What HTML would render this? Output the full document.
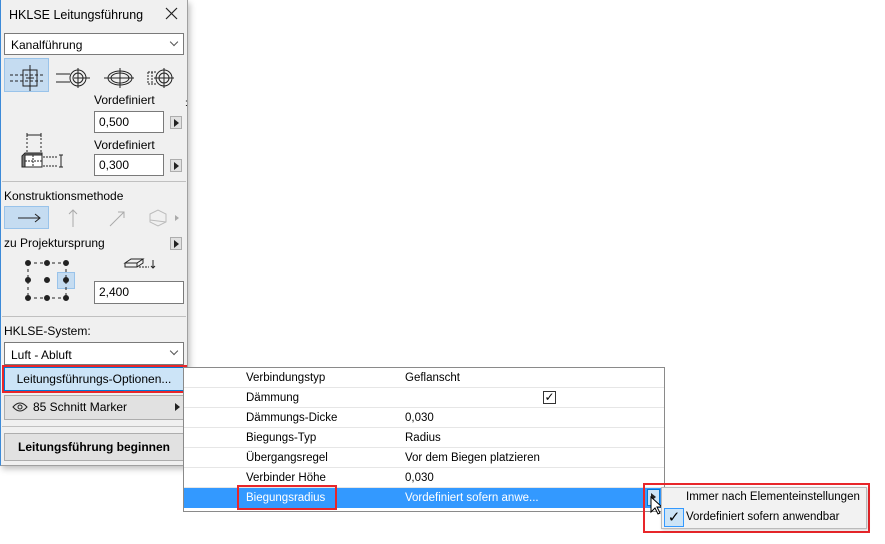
<!DOCTYPE html>
<html><head><meta charset="utf-8">
<style>
*{box-sizing:border-box;margin:0;padding:0}
body{width:885px;height:544px;background:#fff;position:relative;overflow:hidden;font-family:"Liberation Sans",sans-serif;font-size:12px;color:#000}
.a{position:absolute}
.panel{left:0;top:0;width:188px;height:466px;background:#f0f0f0;border-left:1px solid #3c8ad8;border-right:1px solid #a0a0a0;border-bottom:1px solid #a0a0a0;box-shadow:2px 3px 6px rgba(0,0,0,.25)}
.sel{background:#fff;border:1px solid #7a7a7a}
.inp{background:#fff;border:1px solid #7a7a7a;padding-left:4px;line-height:20px}
.arr{width:12px;height:13px;background:#e1e1e1;border:1px solid #adadad}
.arr:after{content:"";position:absolute;left:3px;top:2px;border-left:5px solid #222;border-top:4px solid transparent;border-bottom:4px solid transparent}
.hr{height:1px;background:#c0c0c0}
.chev{position:absolute;right:6px;top:5px;width:6px;height:6px;border-right:1px solid #555;border-bottom:1px solid #555;transform:rotate(45deg)}
.row{position:absolute;left:184px;width:480px;height:20px;border-bottom:1px solid #e6e6e6;line-height:20px;font-size:11.5px}
.row .l{position:absolute;left:62px}
.row .v{position:absolute;left:221px}
</style></head><body>

<div class="a panel">
 <div class="a" style="left:8px;top:8px;font-size:12.5px">HKLSE Leitungsführung</div>
 <svg class="a" style="left:164px;top:7px" width="13" height="13" stroke="#222" stroke-width="1.2"><path d="M1 1l11 11M12 1L1 12"/></svg>
 <div class="a sel" style="left:3px;top:33px;width:180px;height:22px;padding:4px 0 0 6px">Kanalführung<span class="chev"></span></div>
 <div class="a" style="left:3px;top:58px;width:45px;height:34px;background:#c5dcf1;border:1px solid #99c3ea"></div>
 <svg class="a" style="left:3px;top:60px" width="180" height="32" stroke="#222" fill="none" stroke-width="1">
  <path d="M6 15h34M6 21h34" stroke-dasharray="3 2"/><rect x="19" y="10" width="14" height="16"/><path d="M26 5v26M22 18h8"/>
  <path d="M52 14h14M52 22h14"/><circle cx="74" cy="18" r="8"/><circle cx="74" cy="18" r="5"/><path d="M74 8v20M70 18h16"/>
  <ellipse cx="116" cy="18" rx="12" ry="7"/><ellipse cx="116" cy="18" rx="9" ry="5"/><path d="M116 8v20M100 18h30"/>
  <path d="M144 12h8M144 24h8M144 12v12M148 12v12" stroke-dasharray="2 1"/><circle cx="160" cy="18" r="8"/><circle cx="160" cy="18" r="5"/><path d="M160 8v20M150 18h20"/>
 </svg>
 <div class="a" style="left:93px;top:93px">Vordefiniert</div>
 <div class="a inp" style="left:93px;top:111px;width:70px;height:22px">0,500</div>
 <div class="a arr" style="left:169px;top:116px"></div>
 <div class="a" style="left:93px;top:138px">Vordefiniert</div>
 <div class="a inp" style="left:93px;top:154px;width:70px;height:22px">0,300</div>
 <div class="a arr" style="left:169px;top:159px"></div>
 <svg class="a" style="left:18px;top:132px" width="50" height="40" stroke="#222" fill="none">
  <path d="M8 3h14M8 1v4M22 1v4"/><path d="M8 6v14M22 6v14" stroke-dasharray="2 2"/>
  <path d="M3 24l3-3h17v14H3z" fill="#777"/><rect x="6" y="23" width="17" height="12" fill="#fff"/><path d="M6 29h17M14 23v12" stroke-dasharray="2 1"/>
  <path d="M24 25h14M24 34h14" stroke-dasharray="2 1"/><path d="M42 23v12M40 23h4M40 35h4"/>
 </svg>
 <div class="a hr" style="left:1px;top:181px;width:184px"></div>
 <div class="a" style="left:3px;top:189px">Konstruktionsmethode</div>
 <div class="a" style="left:3px;top:206px;width:45px;height:23px;background:#c5dcf1;border:1px solid #99c3ea"></div>
 <svg class="a" style="left:3px;top:206px" width="180" height="24" fill="none" stroke-width="1">
  <path d="M14 12h22M31 8l5 4-5 4" stroke="#222"/>
  <path d="M69 4v17M65 8l4-4 4 4" stroke="#aaa"/>
  <path d="M106 20l14-14M114 6h6v6" stroke="#aaa"/>
  <path d="M146 8l8-4 8 4v8l-8 4-8-4z M146 14l16 2" stroke="#bbb"/><path d="M171 9l4 3-4 3z" fill="#aaa" stroke="none"/>
 </svg>
 <div class="a" style="left:3px;top:236px">zu Projektursprung</div>
 <div class="a arr" style="left:169px;top:237px"></div>
 <div class="a" style="left:56px;top:272px;width:18px;height:17px;background:#c5dcf1;border:1px solid #99c3ea"></div>
 <svg class="a" style="left:20px;top:258px" width="60" height="45" fill="#222" stroke="#222">
  <path d="M7 5h38M7 40h38M7 5v35M45 5v35" stroke-dasharray="3 3" fill="none"/>
  <circle cx="7" cy="5" r="2.5"/><circle cx="26" cy="5" r="2.5"/><circle cx="45" cy="5" r="2.5"/>
  <circle cx="7" cy="22" r="2.5"/><circle cx="26" cy="22" r="2.5"/><circle cx="45" cy="22" r="2.5"/>
  <circle cx="7" cy="40" r="2.5"/><circle cx="26" cy="40" r="2.5"/><circle cx="45" cy="40" r="2.5"/>
 </svg>
 <svg class="a" style="left:122px;top:256px" width="40" height="20" fill="none" stroke="#222">
  <path d="M2 7l6-4h12l-6 4zM2 7v4h12V7M14 11l6-4V3"/><path d="M16 11h10" stroke-dasharray="2 1"/><path d="M30 4v8M28 10l2 2 2-2"/>
 </svg>
 <div class="a inp" style="left:93px;top:281px;width:90px;height:23px">2,400</div>
 <div class="a hr" style="left:1px;top:316px;width:184px"></div>
 <div class="a" style="left:3px;top:324px">HKLSE-System:</div>
 <div class="a sel" style="left:3px;top:342px;width:180px;height:23px;padding:5px 0 0 6px">Luft - Abluft<span class="chev"></span></div>
 <div class="a" style="left:1px;top:365px;width:185px;height:28px;border:2px solid #e8262a"></div>
 <div class="a" style="left:3px;top:367px;width:180px;height:24px;background:#cce4f7;border:1px solid #0078d7;text-align:center;line-height:22px">Leitungsführungs-Optionen...</div>
 <div class="a" style="left:3px;top:395px;width:180px;height:25px;background:#e1e1e1;border:1px solid #adadad;line-height:23px;padding-left:28px">85 Schnitt Marker</div>
 <svg class="a" style="left:11px;top:402px" width="16" height="10" fill="none" stroke="#222"><path d="M1 5q7-8 14 0q-7 8-14 0z"/><circle cx="8" cy="5" r="2"/></svg>
 <div class="a" style="left:174px;top:403px;border-left:5px solid #222;border-top:4px solid transparent;border-bottom:4px solid transparent"></div>
 <div class="a hr" style="left:1px;top:426px;width:184px"></div>
 <div class="a" style="left:3px;top:433px;width:180px;height:28px;background:#e1e1e1;border:1px solid #adadad;text-align:center;line-height:26px;font-weight:bold">Leitungsführung beginnen</div>
</div>
<div class="a" style="left:185px;top:98px;font-size:10px">:</div>

<div class="a" style="left:183px;top:367px;width:482px;height:145px;border:1px solid #8a8a8a;background:#fff"></div>
<div class="row" style="top:368px"><span class="l">Verbindungstyp</span><span class="v">Geflanscht</span></div>
<div class="row" style="top:388px"><span class="l">Dämmung</span></div>
<div class="a" style="left:543px;top:391px;width:13px;height:13px;border:1px solid #333;font-size:12px;line-height:11px;text-align:center">✓</div>
<div class="row" style="top:408px"><span class="l">Dämmungs-Dicke</span><span class="v">0,030</span></div>
<div class="row" style="top:428px"><span class="l">Biegungs-Typ</span><span class="v">Radius</span></div>
<div class="row" style="top:448px"><span class="l">Übergangsregel</span><span class="v">Vor dem Biegen platzieren</span></div>
<div class="row" style="top:468px"><span class="l">Verbinder Höhe</span><span class="v">0,030</span></div>
<div class="row" style="top:488px;background:#3399ff;color:#fff;border:none"><span class="l">Biegungsradius</span><span class="v">Vordefiniert sofern anwe...</span></div>
<div class="a" style="left:237px;top:485px;width:100px;height:25px;border:2px solid #e8262a"></div>

<div class="a" style="left:643px;top:483px;width:227px;height:50px;border:2px solid #e8262a"></div>
<div class="a" style="left:647px;top:489px;width:13px;height:17px;background:#cce4f7;border:1px solid #0078d7"></div>
<div class="a" style="left:651px;top:493px;border-left:5px solid #222;border-top:4px solid transparent;border-bottom:4px solid transparent"></div>
<svg class="a" style="left:650px;top:496px" width="14" height="20"><path d="M1 1v15l4-4 3 6 2-1-3-6h5z" fill="#fff" stroke="#000"/></svg>
<div class="a" style="left:661px;top:487px;width:206px;height:42px;background:#f2f2f2;border:1px solid #bbb;box-shadow:1px 1px 3px rgba(0,0,0,.2)"></div>
<div class="a" style="left:686px;top:491px;font-size:11.5px">Immer nach Elementeinstellungen</div>
<div class="a" style="left:664px;top:508px;width:20px;height:19px;background:#cce4f7;border:1px solid #3399ff;text-align:center;font-size:15px;line-height:17px">✓</div>
<div class="a" style="left:686px;top:511px;font-size:11.5px">Vordefiniert sofern anwendbar</div>
</body></html>
